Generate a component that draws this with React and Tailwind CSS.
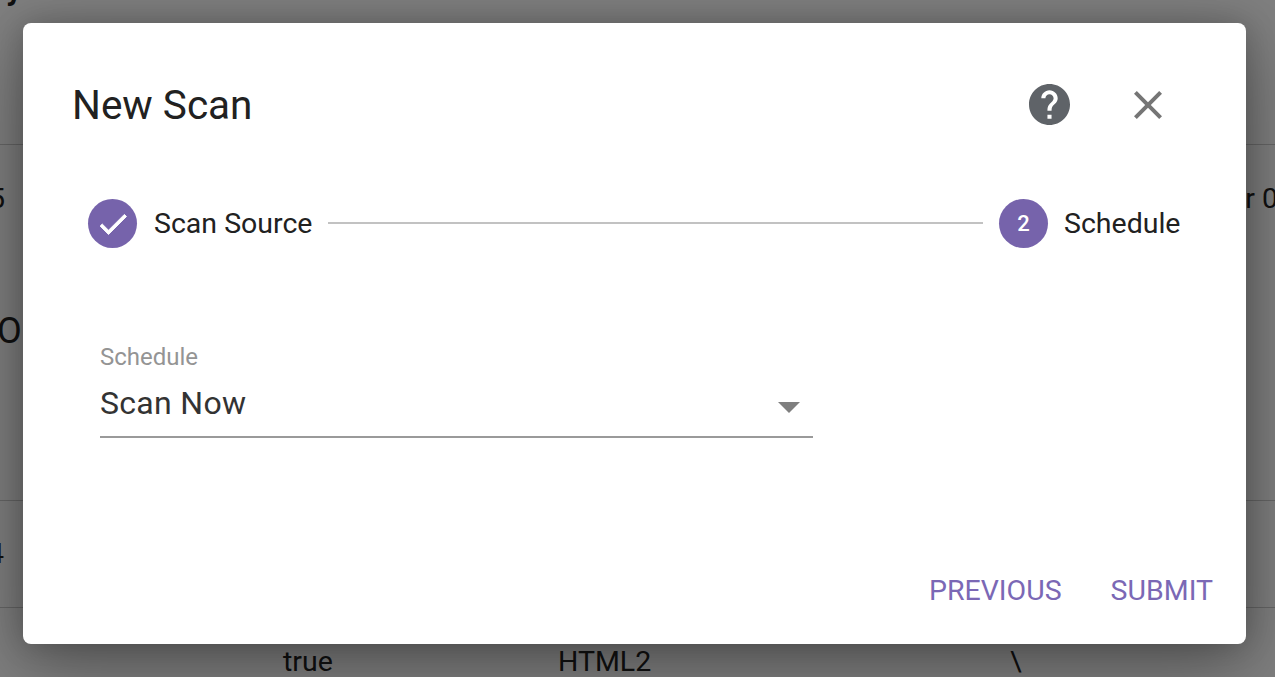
const font = { roboto: 'font-["Roboto",sans-serif]' };

function StepCircle({ children }) {
  return (
    <div className="flex h-[49px] w-[49px] shrink-0 items-center justify-center rounded-full bg-[#7663ab] text-white">
      {children}
    </div>
  );
}

function Background() {
  return (
    <div className="flex h-[677px] flex-col overflow-hidden bg-white text-[28.5px] text-[#222]">
      {/* Page heading, mostly behind the dialog */}
      <div className="h-[145px] shrink-0 border-b border-[#ccc] leading-none">
        <span className="-mt-[27px] ml-[6px] block text-[32px] font-bold">y</span>
      </div>
      {/* Tall row */}
      <div className="flex h-[356px] shrink-0 flex-col border-b border-[#ccc]">
        <div className="flex items-center justify-between pt-[33px]">
          <span className="-ml-[11px]">5</span>
          <span className="-mr-[3px]">r 0</span>
        </div>
        <span className="-ml-[3px] mt-[92px] text-[36px] leading-none">O</span>
      </div>
      <div className="flex h-[107px] shrink-0 items-center border-b border-[#ccc]">
        <span className="-ml-[12px]">4</span>
      </div>
      {/* Row peeking out under the dialog */}
      <div className="grid grid-cols-[558px_452px_1fr] pt-[35px] leading-[38px]">
        <span className="pl-[283px]">true</span>
        <span>HTML2</span>
        <span>\</span>
      </div>
    </div>
  );
}

export default function App() {
  return (
    <div className={`relative h-[677px] w-[1275px] overflow-hidden ${font.roboto}`}>
      <Background />

      {/* Backdrop */}
      <div className="absolute inset-0 flex items-start bg-black/50 pt-[23px] pl-[23px]">
        <div className="flex h-[621px] w-[1223px] flex-col rounded-lg bg-white shadow-[0_22px_70px_rgba(0,0,0,0.35),0_0_30px_rgba(0,0,0,0.2)]">
          {/* Title */}
          <div className="flex h-[163px] items-center pr-[74px] pl-[49px]">
            <h2 className="flex-1 text-[40.5px] leading-[60px] font-normal text-[#212121]">New Scan</h2>
            <div className="flex items-center gap-[54px]">
              <svg viewBox="2 2 20 20" className="h-[41px] w-[41px] fill-[#5f6368]">
                <path d="M12 2C6.48 2 2 6.48 2 12s4.48 10 10 10 10-4.48 10-10S17.52 2 12 2zm1 17h-2v-2h2v2zm2.07-7.75l-.9.92C13.45 12.9 13 13.5 13 15h-2v-.5c0-1.1.45-2.1 1.17-2.83l1.24-1.26c.37-.36.59-.86.59-1.41 0-1.1-.9-2-2-2s-2 .9-2 2H8c0-2.21 1.79-4 4-4s4 1.79 4 4c0 .88-.36 1.68-.93 2.25z" />
              </svg>
              <svg viewBox="0 0 24 24" className="h-[48px] w-[48px] fill-[#757575]">
                <path d="M19 6.41L17.59 5 12 10.59 6.41 5 5 6.41 10.59 12 5 17.59 6.41 19 12 13.41 17.59 19 19 17.59 13.41 12z" />
              </svg>
            </div>
          </div>

          {/* Stepper */}
          <div className="mt-[13px] flex items-center pr-[65px] pl-[65px] text-[28.5px] text-[#212121]">
            <StepCircle>
              <svg viewBox="0 0 24 24" className="h-[36px] w-[36px] fill-white stroke-white stroke-[0.6]">
                <path d="M9 16.17L4.83 12l-1.42 1.41L9 19 21 7l-1.41-1.41z" />
              </svg>
            </StepCircle>
            <span className="mt-[1px] ml-[17px] leading-none">Scan Source</span>
            <div className="mx-[16px] mb-[1px] h-[2px] flex-1 bg-[#c2c2c2]" />
            <StepCircle>
              <span className="text-[22px] leading-none font-medium">2</span>
            </StepCircle>
            <span className="mt-[1px] ml-[16px] w-[117px] leading-none">Schedule</span>
          </div>

          {/* Schedule select */}
          <div className="mt-[96px] ml-[77px] w-[713px]">
            <div className="text-[24px] leading-[26px] text-[#949494]">Schedule</div>
            <div className="flex h-[68px] items-center justify-between border-b-2 border-[#9a9a9a] pr-[13px] pb-[1px] text-[32px] text-[#333]">
              <span className="leading-none tracking-[0.3px]">Scan Now</span>
              <div className="mt-[9px] h-0 w-0 border-x-[11px] border-t-[11px] border-x-transparent border-t-[#7f7f7f]" />
            </div>
          </div>

          {/* Actions */}
          <div className="mt-auto flex items-center justify-end gap-[49px] pr-[33px] pb-[39px] text-[28.5px] leading-none text-[#7b68b5]">
            <button type="button">PREVIOUS</button>
            <button type="button">SUBMIT</button>
          </div>
        </div>
      </div>
    </div>
  );
}
